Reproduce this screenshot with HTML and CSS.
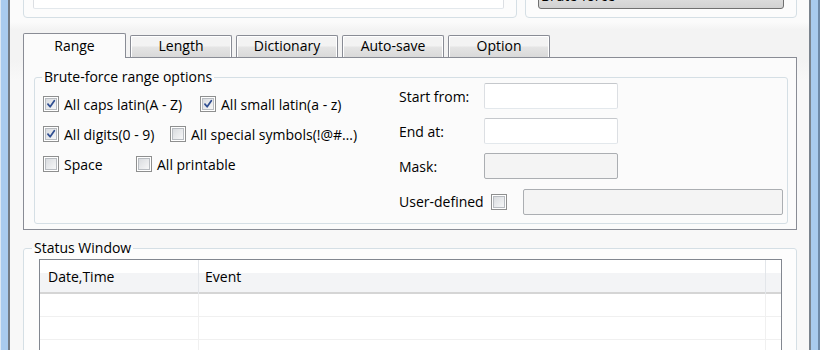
FILE: index.html
```html
<!DOCTYPE html>
<html lang="en">

<head>
	<meta charset="utf-8">
	<title>Brute-force range options</title>
	<link rel="stylesheet" href="styles.css">
</head>

<body>
	<div class="window">
		<div class="frame-left"></div>

		<div class="client">
			<div class="top-row">
				<div class="top-group">
					<div class="edit path-edit"></div>
				</div>
				<div class="top-group">
					<div class="combo">Brute-force</div>
				</div>
			</div>

			<div class="tabs">
				<div class="tab active">Range</div>
				<div class="tab">Length</div>
				<div class="tab">Dictionary</div>
				<div class="tab">Auto-save</div>
				<div class="tab">Option</div>
			</div>

			<div class="tab-panel">
				<fieldset class="groupbox range-box">
					<legend>Brute-force range options</legend>
					<div class="range-grid">
						<div class="checks">
							<div class="check-row">
								<label class="check w-caps"><span class="box checked"><svg viewBox="0 0 16 16"><path d="M4.5 8.2 L7 11.2 L11.8 4.2"/></svg></span>All caps latin(A - Z)</label>
								<label class="check"><span class="box checked"><svg viewBox="0 0 16 16"><path d="M4.5 8.2 L7 11.2 L11.8 4.2"/></svg></span>All small latin(a - z)</label>
							</div>
							<div class="check-row">
								<label class="check w-digits"><span class="box checked"><svg viewBox="0 0 16 16"><path d="M4.5 8.2 L7 11.2 L11.8 4.2"/></svg></span>All digits(0 - 9)</label>
								<label class="check"><span class="box"></span>All special symbols(!@#…)</label>
							</div>
							<div class="check-row">
								<label class="check w-space"><span class="box"></span>Space</label>
								<label class="check"><span class="box"></span>All printable</label>
							</div>
						</div>

						<div class="fields">
							<label class="field-label">Start from:</label>
							<span class="edit"></span>
							<label class="field-label">End at:</label>
							<span class="edit"></span>
							<label class="field-label">Mask:</label>
							<span class="edit disabled"></span>
							<div class="user-row">
								<label class="field-label user-label">User-defined</label>
								<span class="box"></span>
								<span class="edit disabled user-edit"></span>
							</div>
						</div>
					</div>
				</fieldset>
			</div>

			<fieldset class="groupbox status-box">
				<legend>Status Window</legend>
				<div class="list">
					<div class="list-head">
						<div class="col-date">Date,Time</div>
						<div class="col-event">Event</div>
						<div class="col-fill"></div>
					</div>
					<div class="list-row"><div class="col-date"></div><div class="col-event"></div><div class="col-fill"></div></div>
					<div class="list-row"><div class="col-date"></div><div class="col-event"></div><div class="col-fill"></div></div>
					<div class="list-row"><div class="col-date"></div><div class="col-event"></div><div class="col-fill"></div></div>
				</div>
			</fieldset>
		</div>

		<div class="frame-right"></div>
	</div>
</body>

</html>
```

FILE: styles.css
```css
body {
	margin: 0;
	overflow: hidden;
	font-family: 'Open Sans', 'Noto Sans', sans-serif;
	font-size: 14px;
	color: #000;
}

.window {
	display: flex;
	height: 350px;
	overflow: hidden;
}

.frame-left {
	width: 10px;
	flex: none;
	background: linear-gradient(to right, #dbe7f3 0 1px, #a9cbee 1px 8px, #737c86 8px 10px);
}
.frame-right {
	width: 11px;
	flex: none;
	background: linear-gradient(to right, #7a838d 0 2px, #a9cbee 2px 9px, #6f8aa8 9px 11px);
}

.client {
	flex: 1;
	background: linear-gradient(#fbfbfb 0 22px, #f3f3f3 30px 60px, #f8f8f8 80px);
	padding: 0 12px 0 13px;
}

/* the two group boxes cut by the top of the picture */
.top-row {
	display: grid;
	grid-template-columns: 494px 1fr;
	grid-template-rows: 36px;
	gap: 8px;
	height: 36px;
	margin-top: -18px;
}
.top-group {
	display: flex;
	align-items: flex-end;
	box-sizing: border-box;
	height: 36px;
	border: 1px solid #d5dfe5;
	border-radius: 0 0 4px 4px;
	background-color: #fcfcfc;
	padding: 0 12px 8px 9px;
}
.top-group:last-child {
	padding-left: 12px;
}
.path-edit {
	flex: 1;
	height: 24px;
}
.combo {
	flex: 1;
	height: 24px;
	box-sizing: border-box;
	border: 1px solid #707070;
	border-radius: 3px;
	background: linear-gradient(#f2f2f2 0 45%, #dddddd 55%, #d2d2d2);
	padding: 0 0 4px 2px;
	line-height: 16px;
	display: flex;
	align-items: flex-end;
}

/* tabs */
.tabs {
	display: flex;
	align-items: flex-end;
	gap: 4px;
	height: 24px;
	margin-top: 15px;
}
.tab {
	width: 102px;
	height: 22px;
	box-sizing: border-box;
	border: 1px solid #898c95;
	border-bottom: 0;
	border-radius: 2px 2px 0 0;
	background: linear-gradient(#f3f3f3 0 45%, #e4e4e4 55%, #d9d9d9);
	box-shadow: inset 1px 1px 0 #fff, inset -1px 0 0 #fff;
	text-align: center;
	line-height: 19px;
}
.tab.active {
	width: 103px;
	height: 25px;
	margin-bottom: -1px;
	position: relative;
	z-index: 1;
	background: #fbfbfb;
	box-shadow: none;
	line-height: 23px;
}

.tab-panel {
	height: 173px;
	box-sizing: border-box;
	border: 1px solid #898c95;
	background-color: #fbfbfb;
	padding: 13px 8px 0 10px;
}

/* group boxes */
.groupbox {
	margin: 0;
	border: 1px solid #d5dfe5;
	border-radius: 3px;
	min-width: 0;
}
.groupbox legend {
	padding: 0 2px;
	line-height: 12px;
}

.range-box {
	height: 153px;
	box-sizing: border-box;
	padding: 0 4px 0 8px;
}
.range-box legend {
	margin-left: -1px;
}

.range-grid {
	display: grid;
	grid-template-columns: 356px 1fr;
}

.checks {
	padding-top: 6px;
}
.check-row {
	display: flex;
	align-items: center;
	height: 30px;
}
.check {
	display: inline-flex;
	align-items: center;
	gap: 5px;
	white-space: nowrap;
}
.w-caps { width: 157px; }
.w-digits { width: 127px; }
.w-space { width: 93px; }

.box {
	width: 16px;
	height: 16px;
	flex: none;
	box-sizing: border-box;
	border: 1px solid #8e8f8f;
	background: linear-gradient(135deg, #d3d6da, #f4f5f6 80%);
	box-shadow: inset 0 0 0 1px #fff, inset 0 0 0 2px #b8bcc1;
}
.box svg {
	display: block;
	width: 14px;
	height: 14px;
}
.box path {
	fill: none;
	stroke: #304f92;
	stroke-width: 2;
	stroke-linecap: round;
	stroke-linejoin: round;
}

.fields {
	display: grid;
	grid-template-columns: 85px 134px;
	grid-auto-rows: 26px;
	row-gap: 9px;
	align-items: center;
}

.edit {
	display: block;
	height: 26px;
	box-sizing: border-box;
	border: 1px solid;
	border-color: #c5c8cc #dcdfe3 #e3e8ec;
	border-radius: 2px;
	background-color: #fff;
}
.edit.disabled {
	border-color: #abaeb2;
	background-color: #f4f4f4;
}

.user-row {
	grid-column: 1 / -1;
	display: flex;
	align-items: center;
	margin-top: 1px;
	width: 384px;
}
.user-label {
	width: 92px;
}
.user-edit {
	flex: 1;
	margin-left: 16px;
}

/* status window */
.status-box {
	margin-top: 12px;
	height: 130px;
	box-sizing: border-box;
	padding: 0 14px 0 8px;
	background-color: #fdfdfd;
}

.list {
	margin: 5px 0 0 7px;
	height: 120px;
	border: 1px solid #828790;
	background-color: #fff;
}
.list-head, .list-row {
	display: grid;
	grid-template-columns: 159px 567px 1fr;
}
.list-head {
	height: 32px;
	border-bottom: 2px solid #d5d5d5;
	background: linear-gradient(#fff 0 13px, #f3f4f6 13px);
	line-height: 34px;
}
.list-head > div {
	border-right: 1px solid #e3e6ea;
}
.list-head .col-date { padding-left: 8px; }
.list-head .col-event { padding-left: 6px; }
.list-head .col-fill { border-right: 0; }

.list-row {
	height: 23px;
	box-sizing: border-box;
	border-bottom: 1px solid #f0f0f0;
}
.list-row > div {
	border-right: 1px solid #f0f0f0;
}
.list-row .col-fill { border-right: 0; }
```
